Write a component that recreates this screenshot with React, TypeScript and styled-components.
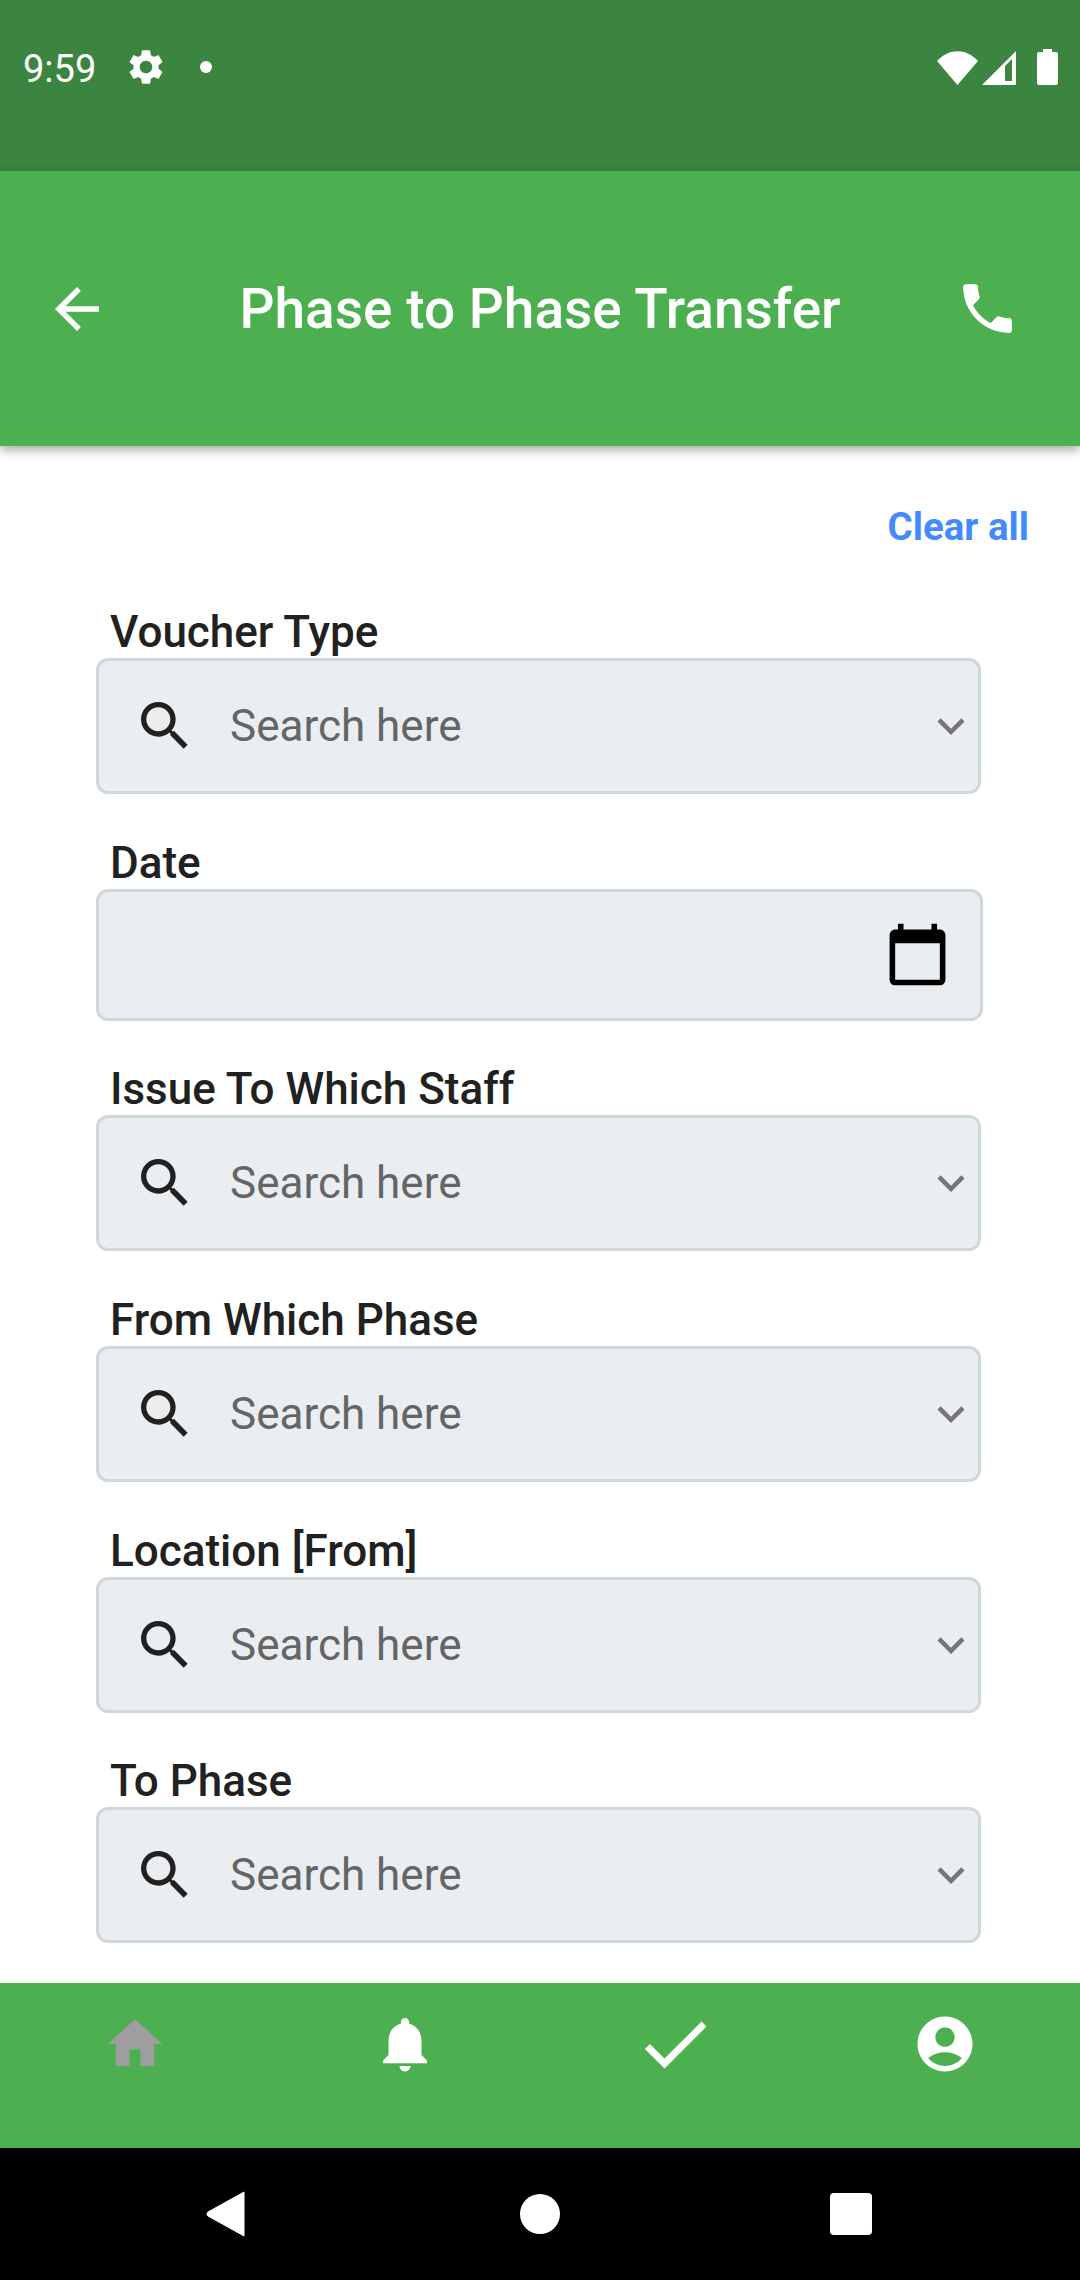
import React from "react";
import styled, { createGlobalStyle } from "styled-components";
import {
  MdAccountCircle,
  MdArrowBack,
  MdCalendarToday,
  MdCheck,
  MdHome,
  MdKeyboardArrowDown,
  MdNotifications,
  MdPhone,
  MdSearch,
  MdSettings,
} from "react-icons/md";

const GlobalStyle = createGlobalStyle`
  html, body {
    margin: 0;
    padding: 0;
    background: #fff;
    font-family: Roboto, "Noto Sans", sans-serif;
  }
`;

const Screen = styled.div`
  width: 1080px;
  height: 2280px;
  display: flex;
  flex-direction: column;
  overflow: hidden;
`;

const StatusBar = styled.div`
  height: 171px;
  flex: none;
  box-sizing: border-box;
  padding: 46px 22px 0 23px;
  background: #3b8540;
  color: #fff;
  display: flex;
  align-items: flex-start;
`;

const Time = styled.span`
  font-size: 38px;
  line-height: 46px;
  margin-right: 29px;
`;

const StatusDot = styled.span`
  width: 12px;
  height: 12px;
  border-radius: 50%;
  background: #fff;
  margin: 15px 0 0 33px;
`;

const StatusRight = styled.div`
  margin-left: auto;
  display: flex;
  align-items: flex-start;
  gap: 4px;
  padding-top: 5px;
`;

const BatteryIcon = styled.svg`
  margin: -2px 0 0 17px;
`;

const Header = styled.header`
  height: 275px;
  flex: none;
  box-sizing: border-box;
  padding: 0 60px 0 44px;
  background: #4caf50;
  color: #fff;
  display: flex;
  align-items: center;
  justify-content: space-between;
  box-shadow: 0 4px 10px rgba(0, 0, 0, 0.35);
  position: relative;
  z-index: 1;
`;

const Title = styled.h1`
  margin: 0 0 0 15px;
  font-size: 55px;
  font-weight: 500;
  line-height: 62px;
`;

const Main = styled.main`
  flex: 1;
  min-height: 0;
  overflow: hidden;
  background: #fff;
  box-sizing: border-box;
  padding: 58px 0 0 96px;
`;

const ClearRow = styled.div`
  display: flex;
  justify-content: flex-end;
  padding-right: 51px;
  margin-bottom: 56px;
`;

const ClearAll = styled.span`
  color: #448aff;
  font-size: 38.5px;
  font-weight: 700;
  line-height: 46px;
`;

const Field = styled.div`
  margin-bottom: 42.67px;
`;

const Label = styled.div`
  font-size: 44px;
  font-weight: 500;
  line-height: 52px;
  color: #212121;
  padding-left: 14px;
`;

const Box = styled.div<{ $date?: boolean }>`
  box-sizing: border-box;
  width: ${(p) => (p.$date ? 887 : 885)}px;
  height: ${(p) => (p.$date ? 132 : 136)}px;
  background: #ebeef1;
  border: 3px solid #cfd8dc;
  border-radius: 12px;
  display: flex;
  align-items: center;
`;

const SearchIcon = styled(MdSearch)`
  width: 64px;
  height: 64px;
  color: #212121;
  margin-left: 34px;
  flex: none;
`;

const Placeholder = styled.span`
  margin-left: 33px;
  font-size: 44px;
  line-height: 50px;
  color: #636567;
  flex: 1;
`;

const Chevron = styled(MdKeyboardArrowDown)`
  width: 54px;
  height: 54px;
  color: #757575;
  flex: none;
`;

const DateIcon = styled(MdCalendarToday)`
  width: 67px;
  height: 67px;
  color: #000;
  margin: 0 29px 0 auto;
`;

const BottomNav = styled.nav`
  height: 165px;
  flex: none;
  background: #4caf50;
  display: grid;
  grid-template-columns: repeat(4, 270px);
  justify-items: center;
  padding-top: 28px;
  box-sizing: border-box;
  color: #fff;
  box-shadow: 0 -1px 4px rgba(0, 0, 0, 0.08);
  position: relative;
`;

const NavIcon = styled.span<{ $muted?: boolean; $size?: number }>`
  display: flex;
  align-items: center;
  justify-content: center;
  width: 66px;
  height: 66px;
  color: ${(p) => (p.$muted ? "#9e9e9e" : "#fff")};
  svg {
    flex: none;
    width: ${(p) => p.$size ?? 66}px;
    height: ${(p) => p.$size ?? 66}px;
  }
`;

const SystemBar = styled.div`
  height: 132px;
  flex: none;
  background: #000;
  display: flex;
  align-items: center;
  padding-left: 206px;
  position: relative;
  svg:nth-child(2) {
    margin: 0 270px 0 274px;
  }
`;

const fields = [
  { label: "Voucher Type" },
  { label: "Date", date: true },
  { label: "Issue To Which Staff" },
  { label: "From Which Phase" },
  { label: "Location [From]" },
  { label: "To Phase" },
];

export default function App() {
  return (
    <Screen>
      <GlobalStyle />
      <StatusBar>
        <Time>9:59</Time>
        <MdSettings size={42} />
        <StatusDot />
        <StatusRight>
          <svg width="41" height="34" viewBox="0 0 41 34">
            <path d="M0 10 C12 -3 29 -3 41 10 L20.5 34 Z" fill="#fff" />
          </svg>
          <svg width="34" height="34" viewBox="0 0 34 34">
            <path
              fillRule="evenodd"
              d="M34 0 V34 H0 Z M30 8 L23 15 V30 H30 Z"
              fill="#fff"
            />
          </svg>
          <BatteryIcon width="21" height="36" viewBox="0 0 21 36">
            <path
              d="M6 0 H15 V3 H19 a2 2 0 0 1 2 2 V34 a2 2 0 0 1 -2 2 H2 a2 2 0 0 1 -2 -2 V5 a2 2 0 0 1 2 -2 H6 Z"
              fill="#fff"
            />
          </BatteryIcon>
        </StatusRight>
      </StatusBar>

      <Header>
        <MdArrowBack size={66} />
        <Title>Phase to Phase Transfer</Title>
        <MdPhone size={65} />
      </Header>

      <Main>
        <ClearRow>
          <ClearAll>Clear all</ClearAll>
        </ClearRow>
        {fields.map((field) => (
          <Field key={field.label}>
            <Label>{field.label}</Label>
            {field.date ? (
              <Box $date>
                <DateIcon />
              </Box>
            ) : (
              <Box>
                <SearchIcon />
                <Placeholder>Search here</Placeholder>
                <Chevron />
              </Box>
            )}
          </Field>
        ))}
      </Main>

      <BottomNav>
        <NavIcon $muted>
          <MdHome />
        </NavIcon>
        <NavIcon>
          <MdNotifications />
        </NavIcon>
        <NavIcon $size={84}>
          <MdCheck />
        </NavIcon>
        <NavIcon>
          <MdAccountCircle />
        </NavIcon>
      </BottomNav>

      <SystemBar>
        <svg width="40" height="46" viewBox="0 0 40 46">
          <path
            d="M38 1 V45 L2 25 a2.5 2.5 0 0 1 0 -4 Z"
            fill="#fff"
            stroke="#fff"
            strokeLinejoin="round"
          />
        </svg>
        <svg width="40" height="40" viewBox="0 0 40 40">
          <circle cx="20" cy="20" r="20" fill="#fff" />
        </svg>
        <svg width="42" height="42" viewBox="0 0 42 42">
          <rect width="42" height="42" rx="4" fill="#fff" />
        </svg>
      </SystemBar>
    </Screen>
  );
}
